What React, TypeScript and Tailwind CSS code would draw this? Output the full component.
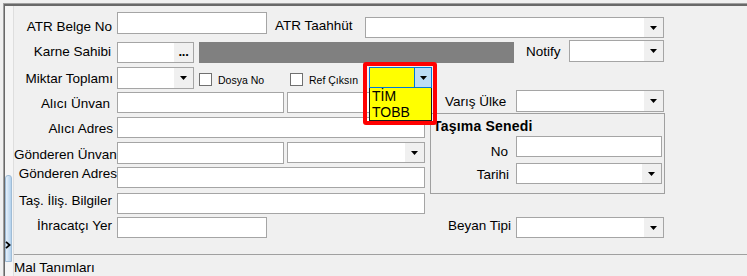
import React from 'react';

const cx = (...c: (string | false | undefined)[]) => c.filter(Boolean).join(' ');

const Arrow = () => (
  <svg width="7" height="4" viewBox="0 0 7 4">
    <path d="M0 0h7L3.5 4z" fill="#000" />
  </svg>
);

const TextBox = ({ className }: { className?: string }) => (
  <div className={cx('shrink-0 bg-white border border-[#a5a5a5]', className)} />
);

const ComboBox = ({ className }: { className?: string }) => (
  <div className={cx('shrink-0 flex bg-white border border-[#a5a5a5]', className)}>
    <div className="flex-1" />
    <div className="w-[19px] bg-[#f0f0f0] flex items-center justify-center">
      <Arrow />
    </div>
  </div>
);

const CheckBox = ({ className }: { className?: string }) => (
  <div className={cx('shrink-0 w-[13px] h-[13px] bg-white border border-[#707070]', className)} />
);

const Label = ({ children, className }: { children: React.ReactNode; className?: string }) => (
  <span className={cx('shrink-0 whitespace-nowrap text-[13.5px] leading-[16px]', className)}>{children}</span>
);

export default function App() {
  return (
    <div className="w-[747px] h-[276px] overflow-hidden bg-[#f0f0f0] text-black font-['Liberation_Sans',Arial,sans-serif]">
      <div className="h-full ml-[3px] mt-[3px] border-t border-l border-[#a0a0a0]">
        <div className="h-full flex border-t-2 border-l border-[#696969]">
          {/* left splitter strip */}
          <div className="w-[9px] shrink-0 bg-[#f5f5f5] border-r border-[#dedede]">
            <div className="w-[7px] h-[87px] mt-[169px] rounded-t-[3px] border border-[#9fbcd6] bg-gradient-to-r from-[#e6f0fa] to-[#b3d1ec]">
              <svg width="6" height="8" viewBox="0 0 6 8" className="mt-[65px] -ml-px">
                <path d="M1 0.8L4.6 4L1 7.2" stroke="#000" strokeWidth="1.8" fill="none" />
              </svg>
            </div>
          </div>

          {/* main panel */}
          <div className="flex-1 flex flex-col relative">
            <div className="h-[256px] flex flex-col">
              {/* ATR row */}
              <div className="flex items-start h-[28px] mt-[6px]">
                <Label className="w-[103px] text-right pr-[5px] mt-[7px]">ATR Belge No</Label>
                <TextBox className="w-[150px] h-[22px]" />
                <Label className="w-[98px] pl-[8px] mt-[6px]">ATR Taahhüt</Label>
                <ComboBox className="w-[299px] h-[21px] mt-[5px]" />
              </div>

              {/* Karne row */}
              <div className="flex items-start h-[27px]">
                <Label className="w-[103px] text-right pr-[6px] mt-[4px]">Karne Sahibi</Label>
                <div className="shrink-0 w-[77px] h-[21px] mt-[2px] flex justify-end bg-white border border-[#a5a5a5]">
                  <div className="w-[19px] bg-[#f0f0f0] flex items-center justify-center pb-[2px] font-bold text-[13px] leading-none tracking-[-0.3px]">
                    ...
                  </div>
                </div>
                <div className="shrink-0 w-[315px] h-[21px] mt-[2px] ml-[5px] bg-[#808080]" />
                <Label className="w-[55px] pl-[12px] mt-[4px]">Notify</Label>
                <ComboBox className="w-[95px] h-[22px]" />
              </div>

              {/* Miktar row */}
              <div className="flex items-start h-[23px]">
                <Label className="w-[103px] text-right pr-[4px] mt-[4px]">Miktar Toplamı</Label>
                <ComboBox className="w-[77px] h-[22px]" />
                <CheckBox className="ml-[5px] mt-[6px]" />
                <span className="shrink-0 w-[78px] pl-[6px] mt-[7px] text-[10.5px] leading-[12px]">Dosya No</span>
                <CheckBox className="mt-[6px]" />
                <span className="shrink-0 pl-[6px] mt-[7px] text-[10.5px] leading-[12px]">Ref Çıksın</span>
              </div>

              {/* body */}
              <div className="flex items-start">
                <div className="w-[411px] shrink-0 flex flex-col pt-[2px]">
                  <div className="flex items-start h-[25px]">
                    <Label className="w-[103px] text-right pr-[7px] mt-[4px]">Alıcı Ünvan</Label>
                    <TextBox className="w-[167px] h-[21px]" />
                    <TextBox className="w-[138px] h-[21px] ml-[3px]" />
                  </div>
                  <div className="flex items-start h-[25px]">
                    <Label className="w-[103px] text-right pr-[4px] mt-[4px]">Alıcı Adres</Label>
                    <TextBox className="w-[308px] h-[21px]" />
                  </div>
                  <div className="flex items-start h-[25px]">
                    <Label className="w-[103px] text-right pr-[1px] mt-[5px]">Gönderen Ünvan</Label>
                    <TextBox className="w-[167px] h-[22px]" />
                    <ComboBox className="w-[138px] h-[21px] ml-[3px]" />
                  </div>
                  <div className="flex items-start h-[26px]">
                    <Label className="w-[103px] text-right -mt-px">Gönderen Adres</Label>
                    <TextBox className="w-[308px] h-[21px]" />
                  </div>
                  <div className="flex items-start h-[24px]">
                    <Label className="w-[103px] text-right pr-[5px]">Taş. İliş. Bilgiler</Label>
                    <TextBox className="w-[308px] h-[21px]" />
                  </div>
                  <div className="flex items-start h-[22px]">
                    <Label className="w-[103px] text-right pr-[5px] mt-[1px]">İhracatçı Yer</Label>
                    <TextBox className="w-[150px] h-[21px]" />
                  </div>
                </div>

                <div className="flex flex-col">
                  <div className="flex items-start h-[23px]">
                    <Label className="w-[91px] pl-[20px] mt-[4px]">Varış Ülke</Label>
                    <ComboBox className="w-[148px] h-[22px]" />
                  </div>

                  {/* Taşıma Senedi group */}
                  <div className="ml-[5px] w-[235px] h-[81px] flex flex-col border border-[#a0a0a0]">
                    <div className="pl-[2px] pt-[4px] font-bold text-[14px] leading-[16px] tracking-[0.2px]">Taşıma Senedi</div>
                    <div className="flex items-start mt-[2px]">
                      <Label className="w-[85px] text-right pr-[8px] mt-[8px]">No</Label>
                      <TextBox className="w-[146px] h-[21px]" />
                    </div>
                    <div className="flex items-start mt-[3px]">
                      <Label className="w-[85px] text-right pr-[7px] mt-[4px]">Tarihi</Label>
                      <ComboBox className="w-[146px] h-[21px]" />
                    </div>
                  </div>

                  <div className="flex items-start h-[21px] mt-[23px]">
                    <Label className="w-[91px] pl-[23px] mt-[1px]">Beyan Tipi</Label>
                    <ComboBox className="w-[148px] h-[21px]" />
                  </div>
                </div>
              </div>
            </div>

            {/* lower section */}
            <div className="flex-1 border-t border-[#a0a0a0]">
              <Label>Mal Tanımları</Label>
            </div>

            {/* open yellow combo with red highlight */}
            <div className="absolute left-[349px] top-[56px] w-[74px] h-[63px] border-4 border-[#ff0000] rounded-[3px] pl-[2px] pt-px pr-px flex flex-col">
              <div className="h-[22px] flex bg-[#ffff00] border border-[#0078d7]">
                <div className="flex-1" />
                <div className="w-[17px] bg-[#bcdcf4] border-l border-[#0078d7] flex items-center justify-center">
                  <Arrow />
                </div>
              </div>
              <div className="flex-1 bg-[#ffff00] border-x border-b border-[#1a1a1a] pl-[2px] flex flex-col">
                <span className="text-[14px] leading-[16px]">TİM</span>
                <span className="text-[14px] leading-[16px]">TOBB</span>
              </div>
            </div>
          </div>
        </div>
      </div>
    </div>
  );
}
